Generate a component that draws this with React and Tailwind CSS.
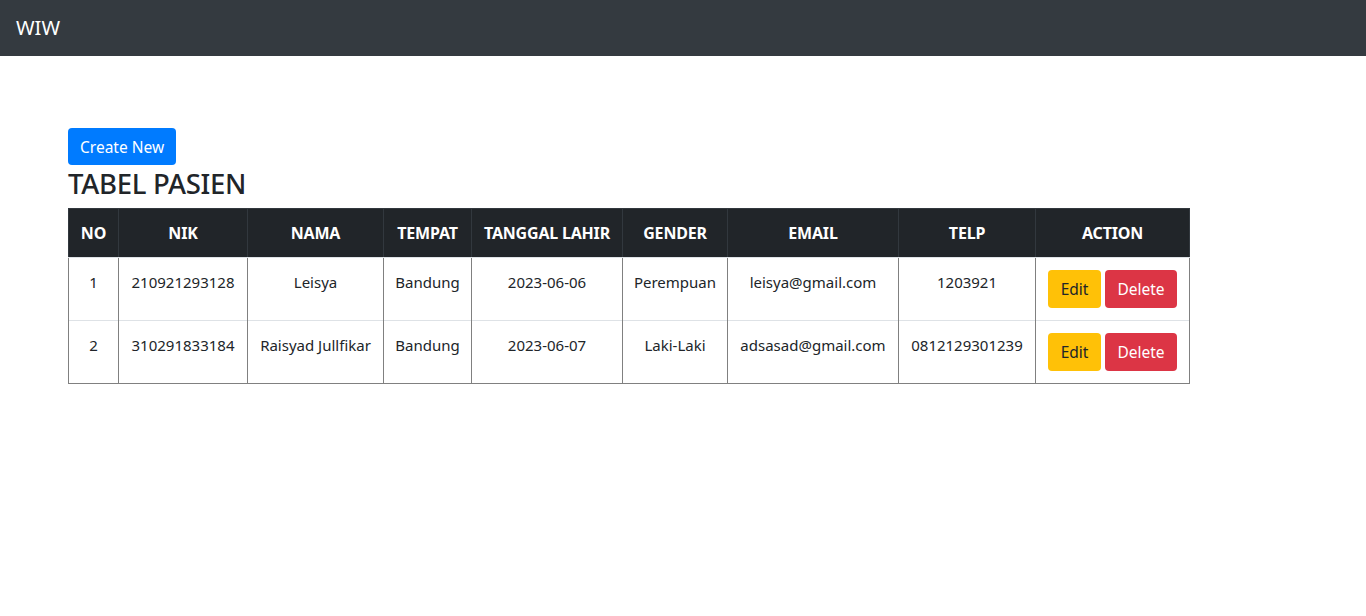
import React from "react";

const patients = [
  {
    no: 1,
    nik: "210921293128",
    nama: "Leisya",
    tempat: "Bandung",
    tanggal: "2023-06-06",
    gender: "Perempuan",
    email: "leisya@gmail.com",
    telp: "1203921",
  },
  {
    no: 2,
    nik: "310291833184",
    nama: "Raisyad Jullfikar",
    tempat: "Bandung",
    tanggal: "2023-06-07",
    gender: "Laki-Laki",
    email: "adsasad@gmail.com",
    telp: "0812129301239",
  },
];

const columns = [
  { label: "NO", width: 50 },
  { label: "NIK", width: 129 },
  { label: "NAMA", width: 136 },
  { label: "TEMPAT", width: 88 },
  { label: "TANGGAL LAHIR", width: 151 },
  { label: "GENDER", width: 105 },
  { label: "EMAIL", width: 171 },
  { label: "TELP", width: 137 },
  { label: "ACTION", width: 154 },
];

const App = () => {
  const tdClass =
    "border-x border-[#808080] px-0 pt-[13px] pb-3 align-top text-center whitespace-nowrap";

  return (
    <div
      className="min-h-screen bg-white text-[#212529]"
      style={{ fontFamily: '"Noto Sans", "Open Sans", sans-serif' }}
    >
      <nav className="h-14 bg-[#343a40] flex items-center px-4">
        <span className="text-white text-xl leading-none">WIW</span>
      </nav>

      <div className="pt-[72px] px-[68px]">
        <button className="h-[37px] px-3 rounded bg-[#007bff] text-white text-[15.5px] leading-6">
          Create New
        </button>
        <h3 className="text-[27.5px] leading-[33px] font-medium mt-[2px] mb-[8px] tracking-[-0.3px]">
          TABEL PASIEN
        </h3>

        <table className="table-fixed border-collapse w-[1121px] text-[15px] border border-[#808080]">
          <colgroup>
            {columns.map((c) => (
              <col key={c.label} style={{ width: c.width }} />
            ))}
          </colgroup>
          <thead>
            <tr className="bg-[#212529] text-white">
              {columns.map((c) => (
                <th
                  key={c.label}
                  className="h-[49px] border border-[#32383e] border-b-[#dee2e6] px-0 text-center font-bold text-[16px] whitespace-nowrap tracking-[-0.2px]"
                >
                  {c.label}
                </th>
              ))}
            </tr>
          </thead>
          <tbody>
            {patients.map((p) => (
              <tr key={p.no} className="border-b border-[#dee2e6] last:border-[#808080] h-[62px]">
                <td className={tdClass}>{p.no}</td>
                <td className={tdClass}>{p.nik}</td>
                <td className={tdClass}>{p.nama}</td>
                <td className={tdClass}>{p.tempat}</td>
                <td className={tdClass}>{p.tanggal}</td>
                <td className={tdClass}>{p.gender}</td>
                <td className={tdClass}>{p.email}</td>
                <td className={tdClass}>{p.telp}</td>
                <td className="border-x border-[#808080] pt-3 pb-3 align-top text-center">
                  <div className="flex justify-center gap-1">
                    <button className="h-[38px] w-[53px] pt-px rounded bg-[#ffc107] text-[#212529] text-[15.5px]">
                      Edit
                    </button>
                    <button className="h-[38px] w-[72px] pt-px rounded bg-[#dc3545] text-white text-[15.5px]">
                      Delete
                    </button>
                  </div>
                </td>
              </tr>
            ))}
          </tbody>
        </table>
      </div>
    </div>
  );
};

export default App;
